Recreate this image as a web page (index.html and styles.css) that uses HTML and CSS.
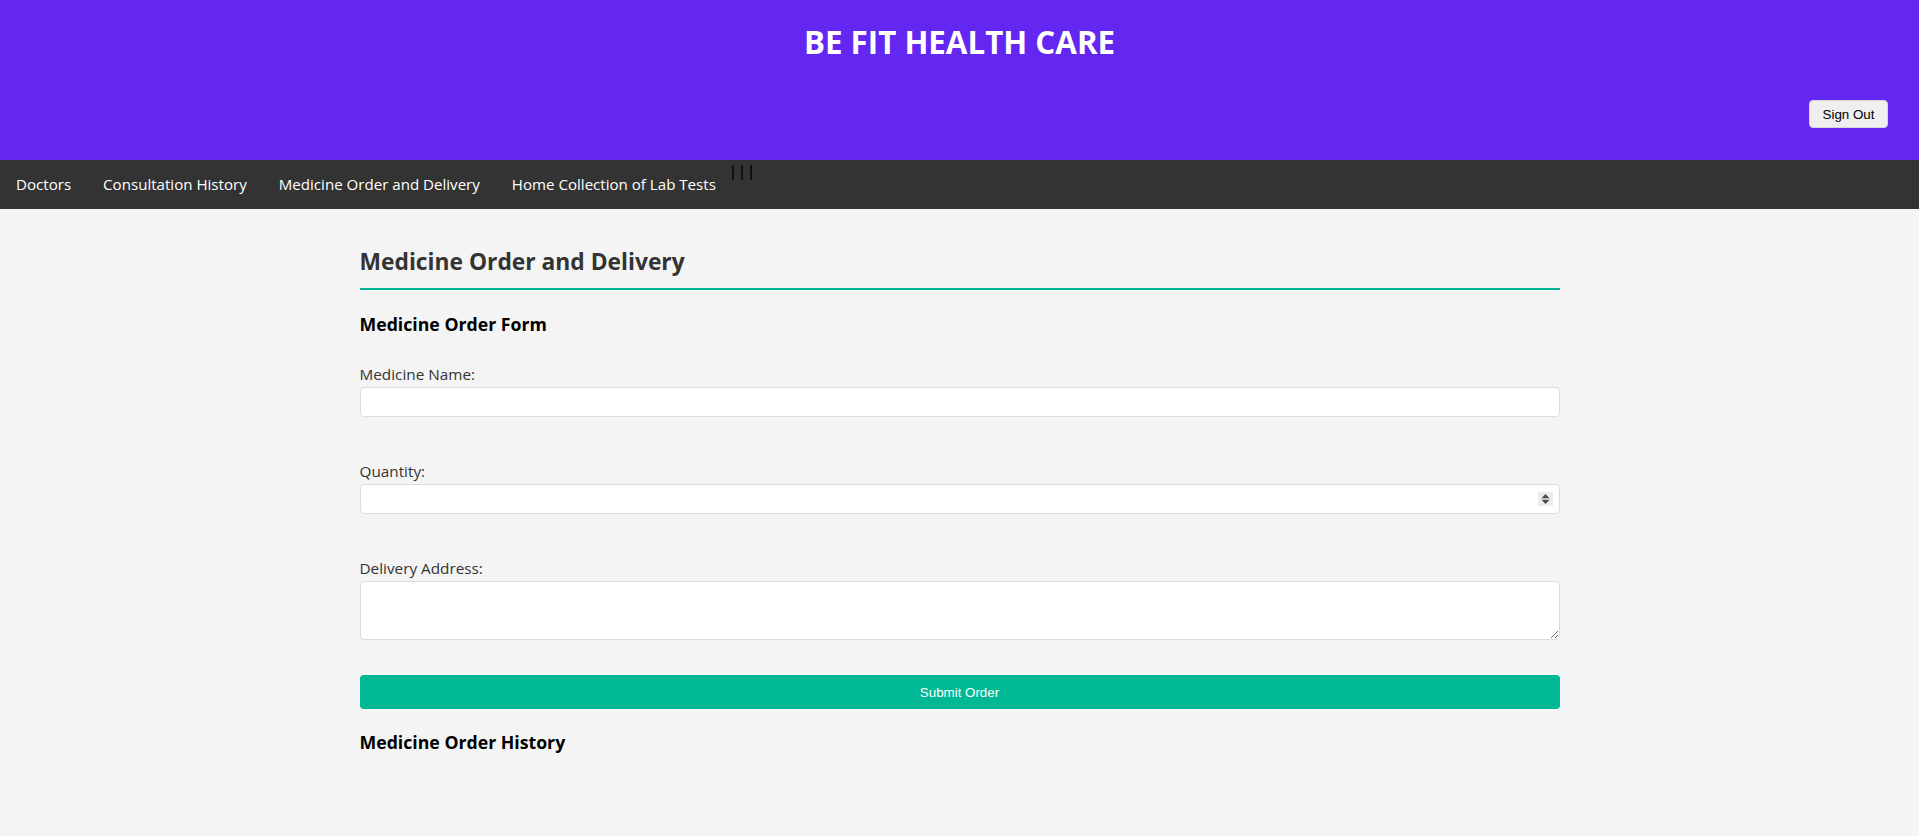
FILE: index.html
```html
<!DOCTYPE html>
<html lang="en">
<head>
<meta charset="utf-8">
<title>Be Fit Health Care</title>
<link rel="stylesheet" href="styles.css">
</head>
<body>
<header class="site-header">
  <h1 class="site-title">BE FIT HEALTH CARE</h1>
  <div class="header-actions">
    <button class="signout-btn" type="button">Sign Out</button>
  </div>
</header>
<nav class="main-nav">
  <a class="nav-link" href="#">Doctors</a>
  <a class="nav-link" href="#">Consultation History</a>
  <a class="nav-link" href="#">Medicine Order and Delivery</a>
  <a class="nav-link" href="#">Home Collection of Lab Tests</a>
  <div class="menu-icon"><span class="bar"></span><span class="bar"></span><span class="bar"></span></div>
</nav>
<main class="content">
  <h2 class="section-title">Medicine Order and Delivery</h2>
  <h3 class="sub-title">Medicine Order Form</h3>
  <form class="order-form">
    <div class="field">
      <label class="field-label" for="med">Medicine Name:</label>
      <input class="field-input" id="med" type="text">
    </div>
    <div class="field">
      <label class="field-label" for="qty">Quantity:</label>
      <div class="number-wrap">
        <input class="field-input" id="qty" type="number">
        <span class="spinner" aria-hidden="true">
          <svg width="15" height="14" viewBox="0 0 15 14"><rect width="15" height="14" fill="#ececec"/><path d="M3.5 6.2 L7.5 2 L11.5 6.2 Z" fill="#4a4a4a"/><path d="M3.5 7.8 L7.5 12 L11.5 7.8 Z" fill="#4a4a4a"/></svg>
        </span>
      </div>
    </div>
    <div class="field">
      <label class="field-label" for="addr">Delivery Address:</label>
      <textarea class="field-textarea" id="addr"></textarea>
    </div>
    <button class="submit-btn" type="button">Submit Order</button>
  </form>
  <h3 class="sub-title history-title">Medicine Order History</h3>
</main>
</body>
</html>
```

FILE: styles.css
```css
* { box-sizing: border-box; }
html, body { margin: 0; padding: 0; }
body {
  background: #f4f4f4;
  font-family: "Open Sans", "Noto Sans", sans-serif;
  color: #333;
}
.site-header {
  background: #6327f1;
  height: 160px;
  display: flex;
  flex-direction: column;
  padding: 20px 31px 0 31px;
}
.site-title {
  margin: 0;
  text-align: center;
  color: #fff;
  font-size: 31.3px;
  font-weight: 700;
  line-height: 44px;
}
.header-actions {
  display: flex;
  justify-content: flex-end;
  margin-top: 36px;
}
.signout-btn {
  font-family: "Liberation Sans", Arial, sans-serif;
  font-size: 13.33px;
  width: 79px;
  height: 28px;
  background: #efefef;
  color: #000;
  border: 1px solid #d6d6d6;
  border-radius: 4px;
  padding: 0;
}
.main-nav {
  background: #333;
  height: 49px;
  display: flex;
  align-items: center;
}
.nav-link {
  color: #fff;
  text-decoration: none;
  font-size: 15.1px;
  padding: 0 16px;
  line-height: 49px;
}
.menu-icon {
  align-self: flex-start;
  margin-top: 5px;
  display: flex;
  gap: 7px;
  height: 15px;
}
.bar {
  display: block;
  width: 2px;
  height: 15px;
  background: #111;
}
.content {
  max-width: 1200px;
  margin: 0 auto;
}
.section-title {
  margin: 0;
  padding-top: 37px;
  padding-bottom: 10px;
  font-size: 22.8px;
  line-height: 32px;
  font-weight: 700;
  color: #333;
  border-bottom: 2px solid #00b894;
}
.sub-title {
  margin: 22px 0 0 0;
  font-size: 17.7px;
  line-height: 24px;
  font-weight: 700;
  color: #000;
}
.order-form {
  margin-top: 27px;
}
.field {
  margin-bottom: 43px;
}
.field:last-of-type { margin-bottom: 35px; }
.field-label {
  display: block;
  font-size: 15.3px;
  line-height: 22px;
  color: #333;
  margin-bottom: 2px;
}
.number-wrap {
  position: relative;
}
.spinner {
  position: absolute;
  right: 7px;
  top: 8px;
  display: block;
  width: 15px;
  height: 14px;
  pointer-events: none;
}
.spinner svg { display: block; }
.field-input, .field-textarea {
  display: block;
  width: 100%;
  height: 30px;
  border: 1px solid #ddd;
  border-radius: 4px;
  background: #fff;
  font-family: inherit;
  font-size: 15px;
}
.field-input[type="number"] { -moz-appearance: textfield; }
.field-input[type="number"]::-webkit-inner-spin-button,
.field-input[type="number"]::-webkit-outer-spin-button { -webkit-appearance: none; margin: 0; }
.field-textarea {
  height: 59px;
  resize: vertical;
}
.submit-btn {
  display: block;
  width: 100%;
  height: 34px;
  background: #00b894;
  color: #fff;
  border: none;
  border-radius: 4px;
  font-family: "Liberation Sans", Arial, sans-serif;
  font-size: 13.33px;
  font-weight: 400;
}
.history-title {
  margin-top: 21px;
}
```
